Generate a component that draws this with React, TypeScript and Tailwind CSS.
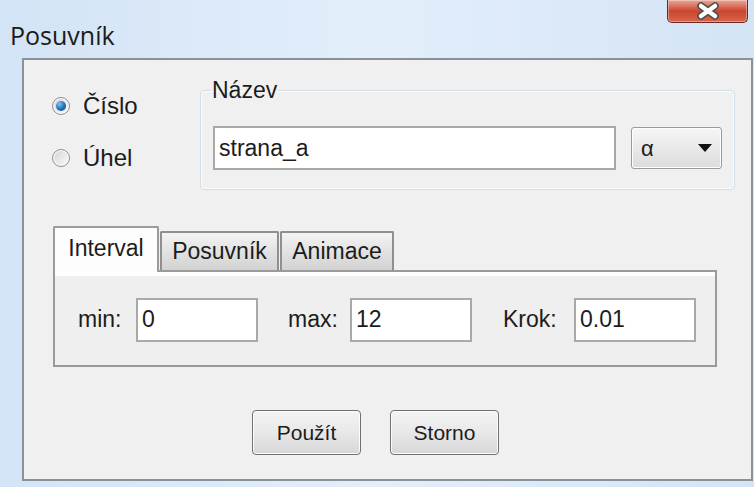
const ui = { fontFamily: '"Liberation Sans", Arial, sans-serif' };

function CloseButton() {
  return (
    <div className="w-[81px] h-[23px] rounded-b-[5px] border border-t-0 border-[#6b2a22] bg-gradient-to-b from-[#e9a797] via-[#c9452e] to-[#d8664d] flex items-center justify-center shadow-[inset_0_0_0_1px_rgba(255,255,255,0.35)]">
      <svg width="26" height="18" viewBox="0 0 26 18">
        <path d="M6 4 L20 14 M20 4 L6 14" stroke="#4d4d4d" strokeWidth="7.5" strokeLinecap="round" />
        <path d="M6 4 L20 14 M20 4 L6 14" stroke="#ffffff" strokeWidth="4.5" strokeLinecap="round" />
      </svg>
    </div>
  );
}

function Radio({ checked, label }: { checked?: boolean; label: string }) {
  return (
    <label className="flex items-center gap-[13px] text-[24px] leading-[24px] text-[#1c1c1c]">
      <span className="w-[18px] h-[18px] rounded-full border border-[#8f8f8f] bg-gradient-to-br from-[#d4d4d4] to-[#fbfbfb] flex items-center justify-center shadow-[inset_0_0_0_1px_#ffffff]">
        {checked && (
          <span className="w-[10px] h-[10px] rounded-full bg-[radial-gradient(circle_at_35%_30%,#7fc4f2,#1f6fb4_55%,#0b3f78)]" />
        )}
      </span>
      {label}
    </label>
  );
}

function Field({ value, width }: { value: string; width: string }) {
  return (
    <div
      className={`${width} h-[44px] bg-white border-2 border-[#a9a9a9] flex items-center px-[4px] text-[23px] text-[#1c1c1c]`}
    >
      {value}
    </div>
  );
}

function Button({ label }: { label: string }) {
  return (
    <button className="w-[109px] h-[45px] rounded-[4px] border border-[#707070] bg-gradient-to-b from-[#f4f4f4] via-[#e8e8e8] to-[#d6d6d6] shadow-[inset_0_0_0_1px_#fcfcfc] text-[21px] text-[#1c1c1c]">
      {label}
    </button>
  );
}

const tab = "h-[39px] ml-[1px] bg-gradient-to-b from-[#f3f3f3] to-[#d2d2d2] border-2 border-b-0 border-[#8f8f8f] rounded-t-[2px] flex items-center justify-center text-[23px] text-[#1c1c1c]";

export default function App() {
  return (
    <div className="w-[754px] h-[487px] bg-gradient-to-r from-[#d3e4f6] via-[#e3eefa] to-[#d4e4f5] flex flex-col overflow-hidden" style={ui}>
      {/* title bar */}
      <div className="h-[58px] flex items-start justify-between pl-[10px] pr-[6px]">
        <div className="mt-[20px] text-[25px] leading-[30px] text-[#1b1b1b]" style={{ fontFamily: '"Open Sans", "Noto Sans", sans-serif' }}>
          Posuvník
        </div>
        <CloseButton />
      </div>

      {/* dialog body */}
      <div className="ml-[22px] mr-[1px] h-[423px] border-2 border-[#8a9199] bg-[#f0f0f0] flex flex-col">
        <div className="flex mt-[18px]">
          <div className="flex flex-col gap-[28px] pl-[28px] pt-[16px] w-[176px]">
            <Radio checked label="Číslo" />
            <Radio label="Úhel" />
          </div>

          <fieldset className="w-[529px] h-[112px] border border-[#d3dde6] rounded-[4px] shadow-[inset_0_0_0_1px_#fafcfd] px-[12px]">
            <legend className="ml-[-2px] px-[1px] text-[23px] leading-[24px] text-[#1c1c1c]">Název</legend>
            <div className="flex items-center mt-[24px] gap-[15px]">
              <Field value="strana_a" width="w-[403px]" />
              <div className="w-[91px] h-[42px] rounded-[3px] border border-[#9a9a9a] bg-gradient-to-b from-[#f6f6f6] to-[#dcdcdc] shadow-[inset_0_0_0_1px_#fdfdfd] flex items-center justify-between pl-[9px] pr-[9px] text-[22px] text-[#1c1c1c]">
                <span>α</span>
                <svg width="14" height="8" viewBox="0 0 14 8">
                  <path d="M0 0 H14 L7 8 Z" fill="#111" />
                </svg>
              </div>
            </div>
          </fieldset>
        </div>

        {/* tabbed pane */}
        <div className="ml-[29px] mt-[35px] w-[664px]">
          <div className="flex items-end h-[45px]">
            <div className="h-[46px] w-[106px] -mb-[2px] relative z-10 bg-[#fdfdfd] border-2 border-b-0 border-[#9c9c9c] rounded-t-[2px] flex items-center justify-center pb-[4px] text-[23px] text-[#1c1c1c]">
              Interval
            </div>
            <div className={`${tab} w-[119px]`}>Posuvník</div>
            <div className={`${tab} w-[114px]`}>Animace</div>
          </div>
          <div className="h-[97px] border-2 border-[#9a9a9a] bg-[#efefef] shadow-[inset_0_4px_0_#ffffff] flex items-center pl-[23px] pt-[2px] text-[23px] text-[#1c1c1c]">
            <span className="w-[58px]">min:</span>
            <Field value="0" width="w-[122px]" />
            <span className="ml-[30px] w-[62px]">max:</span>
            <Field value="12" width="w-[122px]" />
            <span className="ml-[31px] w-[71px]">Krok:</span>
            <Field value="0.01" width="w-[122px]" />
          </div>
        </div>

        <div className="flex gap-[29px] pl-[228px] mt-[43px]">
          <Button label="Použít" />
          <Button label="Storno" />
        </div>
      </div>
    </div>
  );
}
